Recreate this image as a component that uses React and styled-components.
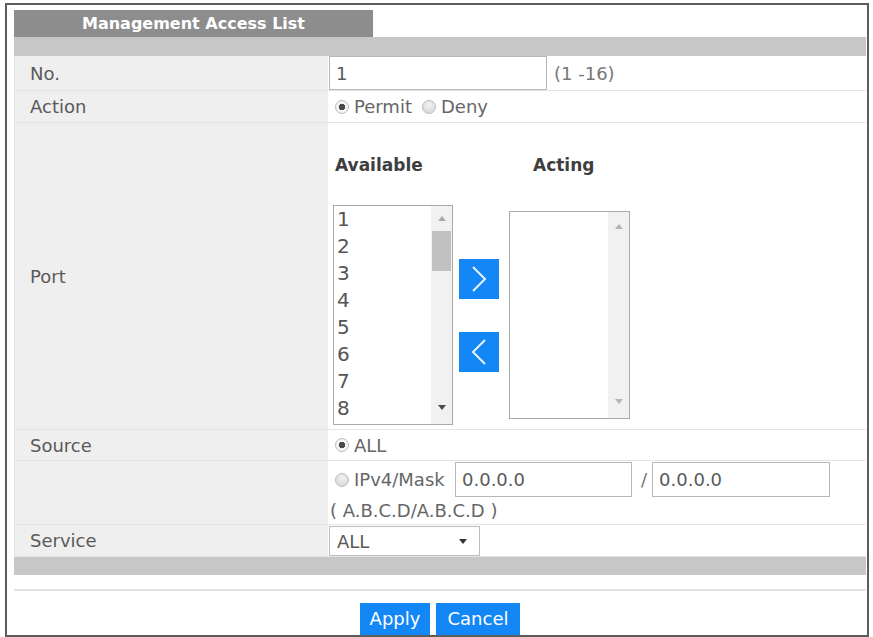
import React from 'react';
import styled, { createGlobalStyle } from 'styled-components';

const Global = createGlobalStyle`
  body {
    margin: 0;
    background: #fff;
    font-family: "DejaVu Sans", "Liberation Sans", sans-serif;
  }
`;

const Frame = styled.div`
  box-sizing: border-box;
  width: 864px;
  height: 634px;
  margin: 3px 0 0 5px;
  border: 2px solid #5c5c5c;
  padding: 5px 1px 0 7px;
  overflow: hidden;
  background: #fff;
`;

const Tab = styled.div`
  width: 359px;
  height: 27px;
  background: #8d8d8d;
  color: #fff;
  font-weight: bold;
  font-size: 16px;
  display: flex;
  align-items: center;
  justify-content: center;
`;

const Bar = styled.div`
  height: ${p => p.h}px;
  background: #c7c7c7;
`;

const Row = styled.div`
  box-sizing: border-box;
  display: grid;
  grid-template-columns: 314px 1fr;
  height: ${p => p.h}px;
  border-bottom: 1px solid #e4e4e4;
`;

const Label = styled.div`
  background: #efefef;
  border-left: 1px solid #e2e2e2;
  padding-left: 15px;
  display: flex;
  align-items: center;
  color: #5a5a5a;
  font-size: 18px;
`;

const Value = styled.div`
  display: flex;
  flex-direction: ${p => (p.column ? 'column' : 'row')};
  align-items: ${p => (p.column ? 'flex-start' : 'center')};
  padding-left: ${p => p.pad ?? 7}px;
  color: #666;
  font-size: 18px;
`;

const TextBox = styled.input`
  box-sizing: border-box;
  width: ${p => p.w}px;
  height: ${p => p.h || 34}px;
  border: 1px solid #b8b8b8;
  padding: 0 0 0 6px;
  margin: ${p => p.m || 0};
  font: inherit;
  font-size: 18px;
  color: #5a5a5a;
  background: #fff;
  outline: none;
`;

const Hint = styled.span`
  margin-left: 7px;
  color: #777;
`;

const Radio = styled.span`
  box-sizing: border-box;
  width: 14px;
  height: 14px;
  border-radius: 50%;
  border: 1px solid #bdbdbd;
  background: ${p =>
    p.on
      ? 'radial-gradient(circle, #4a4a4a 0 3px, #f4f4f4 3.5px)'
      : 'radial-gradient(circle at 50% 35%, #f2f2f2, #d2d2d2)'};
  margin: 0 5px 0 ${p => p.ml || 0}px;
  flex: none;
`;

const Choice = styled.span`
  color: #666;
`;

const PortGrid = styled.div`
  display: grid;
  grid-template-columns: 120px 56px 121px;
  grid-template-rows: 21px 220px;
  row-gap: 29px;
  padding: 32px 0 0 5px;
`;

const Head = styled.div`
  font-size: 17px;
  font-weight: bold;
  color: #3e3e3e;
  padding-left: ${p => p.pl}px;
  line-height: 21px;
`;

const ListBox = styled.div`
  box-sizing: border-box;
  height: ${p => p.h}px;
  align-self: center;
  border: 1px solid #ababab;
  display: flex;
  background: #fff;
`;

const Items = styled.div`
  flex: 1;
  padding-left: 3px;
  font-size: 20px;
  line-height: 27px;
  color: #555;
`;

const Track = styled.div`
  width: 21px;
  background: #f1f1f1;
  display: flex;
  flex-direction: column;
  align-items: center;
`;

const ArrowSlot = styled.div`
  height: ${p => p.h}px;
  display: flex;
  align-items: center;
  justify-content: center;
  flex: none;
`;

const Tri = styled.span`
  width: 0;
  height: 0;
  border-left: 4px solid transparent;
  border-right: 4px solid transparent;
  ${p => (p.down ? 'border-top' : 'border-bottom')}: 5px solid ${p => p.c};
`;

const Thumb = styled.div`
  width: 19px;
  height: 40px;
  background: #c1c1c1;
  flex: none;
`;

const Spacer = styled.div`
  flex: 1;
`;

const Movers = styled.div`
  display: flex;
  flex-direction: column;
  align-items: flex-start;
  justify-content: center;
  gap: 33px;
  padding-left: 6px;
`;

const MoveBtn = styled.div`
  width: 40px;
  height: 40px;
  background: #1387f6;
  display: flex;
  align-items: center;
  justify-content: center;
`;

const MaskText = styled.span`
  width: 100px;
  flex: none;
`;

const Slash = styled.span`
  margin: 0 5px 0 9px;
  color: #777;
`;

const Line = styled.div`
  display: flex;
  align-items: center;
  height: ${p => p.h}px;
  margin-top: ${p => p.mt || 0}px;
`;

const Select = styled.div`
  box-sizing: border-box;
  width: 151px;
  height: 30px;
  margin-top: 1px;
  border: 1px solid #bdbdbd;
  display: flex;
  align-items: center;
  justify-content: space-between;
  padding: 0 12px 0 7px;
  color: #5a5a5a;
  background: #fff;
`;

const Footer = styled.div`
  margin-top: 14px;
  border-top: 2px solid #e2e2e2;
  padding-top: 12px;
  display: flex;
  justify-content: center;
  gap: 6px;
`;

const FootBtn = styled.div`
  width: ${p => p.w}px;
  height: 40px;
  background: #1387f6;
  color: #fff;
  font-size: 18px;
  line-height: 31px;
  text-align: center;
`;

function Chevron({ left }) {
  return (
    <svg width="40" height="40" viewBox="0 0 40 40">
      <polyline
        points={left ? '26,8 14,20 26,32' : '14,8 26,20 14,32'}
        fill="none"
        stroke="#e8f2ff"
        strokeWidth="2"
      />
    </svg>
  );
}

function Scroll({ thumb, top, bottom, upColor, downColor }) {
  return (
    <Track>
      <ArrowSlot h={top}>
        <Tri c={upColor} />
      </ArrowSlot>
      {thumb && <Thumb />}
      <Spacer />
      <ArrowSlot h={bottom}>
        <Tri down c={downColor} />
      </ArrowSlot>
    </Track>
  );
}

export default function App() {
  const ports = [1, 2, 3, 4, 5, 6, 7, 8];
  return (
    <>
      <Global />
      <Frame>
        <Tab>Management Access List</Tab>
        <Bar h={19} />

        <Row h={35}>
          <Label>No.</Label>
          <Value pad={1}>
            <TextBox w={218} defaultValue="1" />
            <Hint>(1 -16)</Hint>
          </Value>
        </Row>

        <Row h={32}>
          <Label>Action</Label>
          <Value>
            <Radio on />
            <Choice>Permit</Choice>
            <Radio ml={10} />
            <Choice>Deny</Choice>
          </Value>
        </Row>

        <Row h={307}>
          <Label>Port</Label>
          <PortGrid>
            <Head pl={2}>Available</Head>
            <div />
            <Head pl={24}>Acting</Head>
            <ListBox h={220}>
              <Items>
                {ports.map(n => (
                  <div key={n}>{n}</div>
                ))}
              </Items>
              <Scroll thumb top={25} bottom={34} upColor="#a8a8a8" downColor="#4a4a4a" />
            </ListBox>
            <Movers>
              <MoveBtn>
                <Chevron />
              </MoveBtn>
              <MoveBtn>
                <Chevron left />
              </MoveBtn>
            </Movers>
            <ListBox h={208}>
              <Items />
              <Scroll top={28} bottom={34} upColor="#b4b4b4" downColor="#b4b4b4" />
            </ListBox>
          </PortGrid>
        </Row>

        <Row h={31}>
          <Label>Source</Label>
          <Value>
            <Radio on />
            <Choice>ALL</Choice>
          </Value>
        </Row>

        <Row h={64}>
          <Label />
          <Value column pad={2}>
            <Line h={35} mt={1}>
              <Radio ml={5} />
              <MaskText>IPv4/Mask</MaskText>
              <TextBox w={177} h={35} m="0 0 0 1px" defaultValue="0.0.0.0" />
              <Slash>/</Slash>
              <TextBox w={178} h={35} defaultValue="0.0.0.0" />
            </Line>
            <Line h={27}>( A.B.C.D/A.B.C.D )</Line>
          </Value>
        </Row>

        <Row h={32}>
          <Label>Service</Label>
          <Value pad={1}>
            <Select>
              <span>ALL</span>
              <Tri down c="#333" />
            </Select>
          </Value>
        </Row>

        <Bar h={18} />

        <Footer>
          <FootBtn w={70}>Apply</FootBtn>
          <FootBtn w={84}>Cancel</FootBtn>
        </Footer>
      </Frame>
    </>
  );
}
